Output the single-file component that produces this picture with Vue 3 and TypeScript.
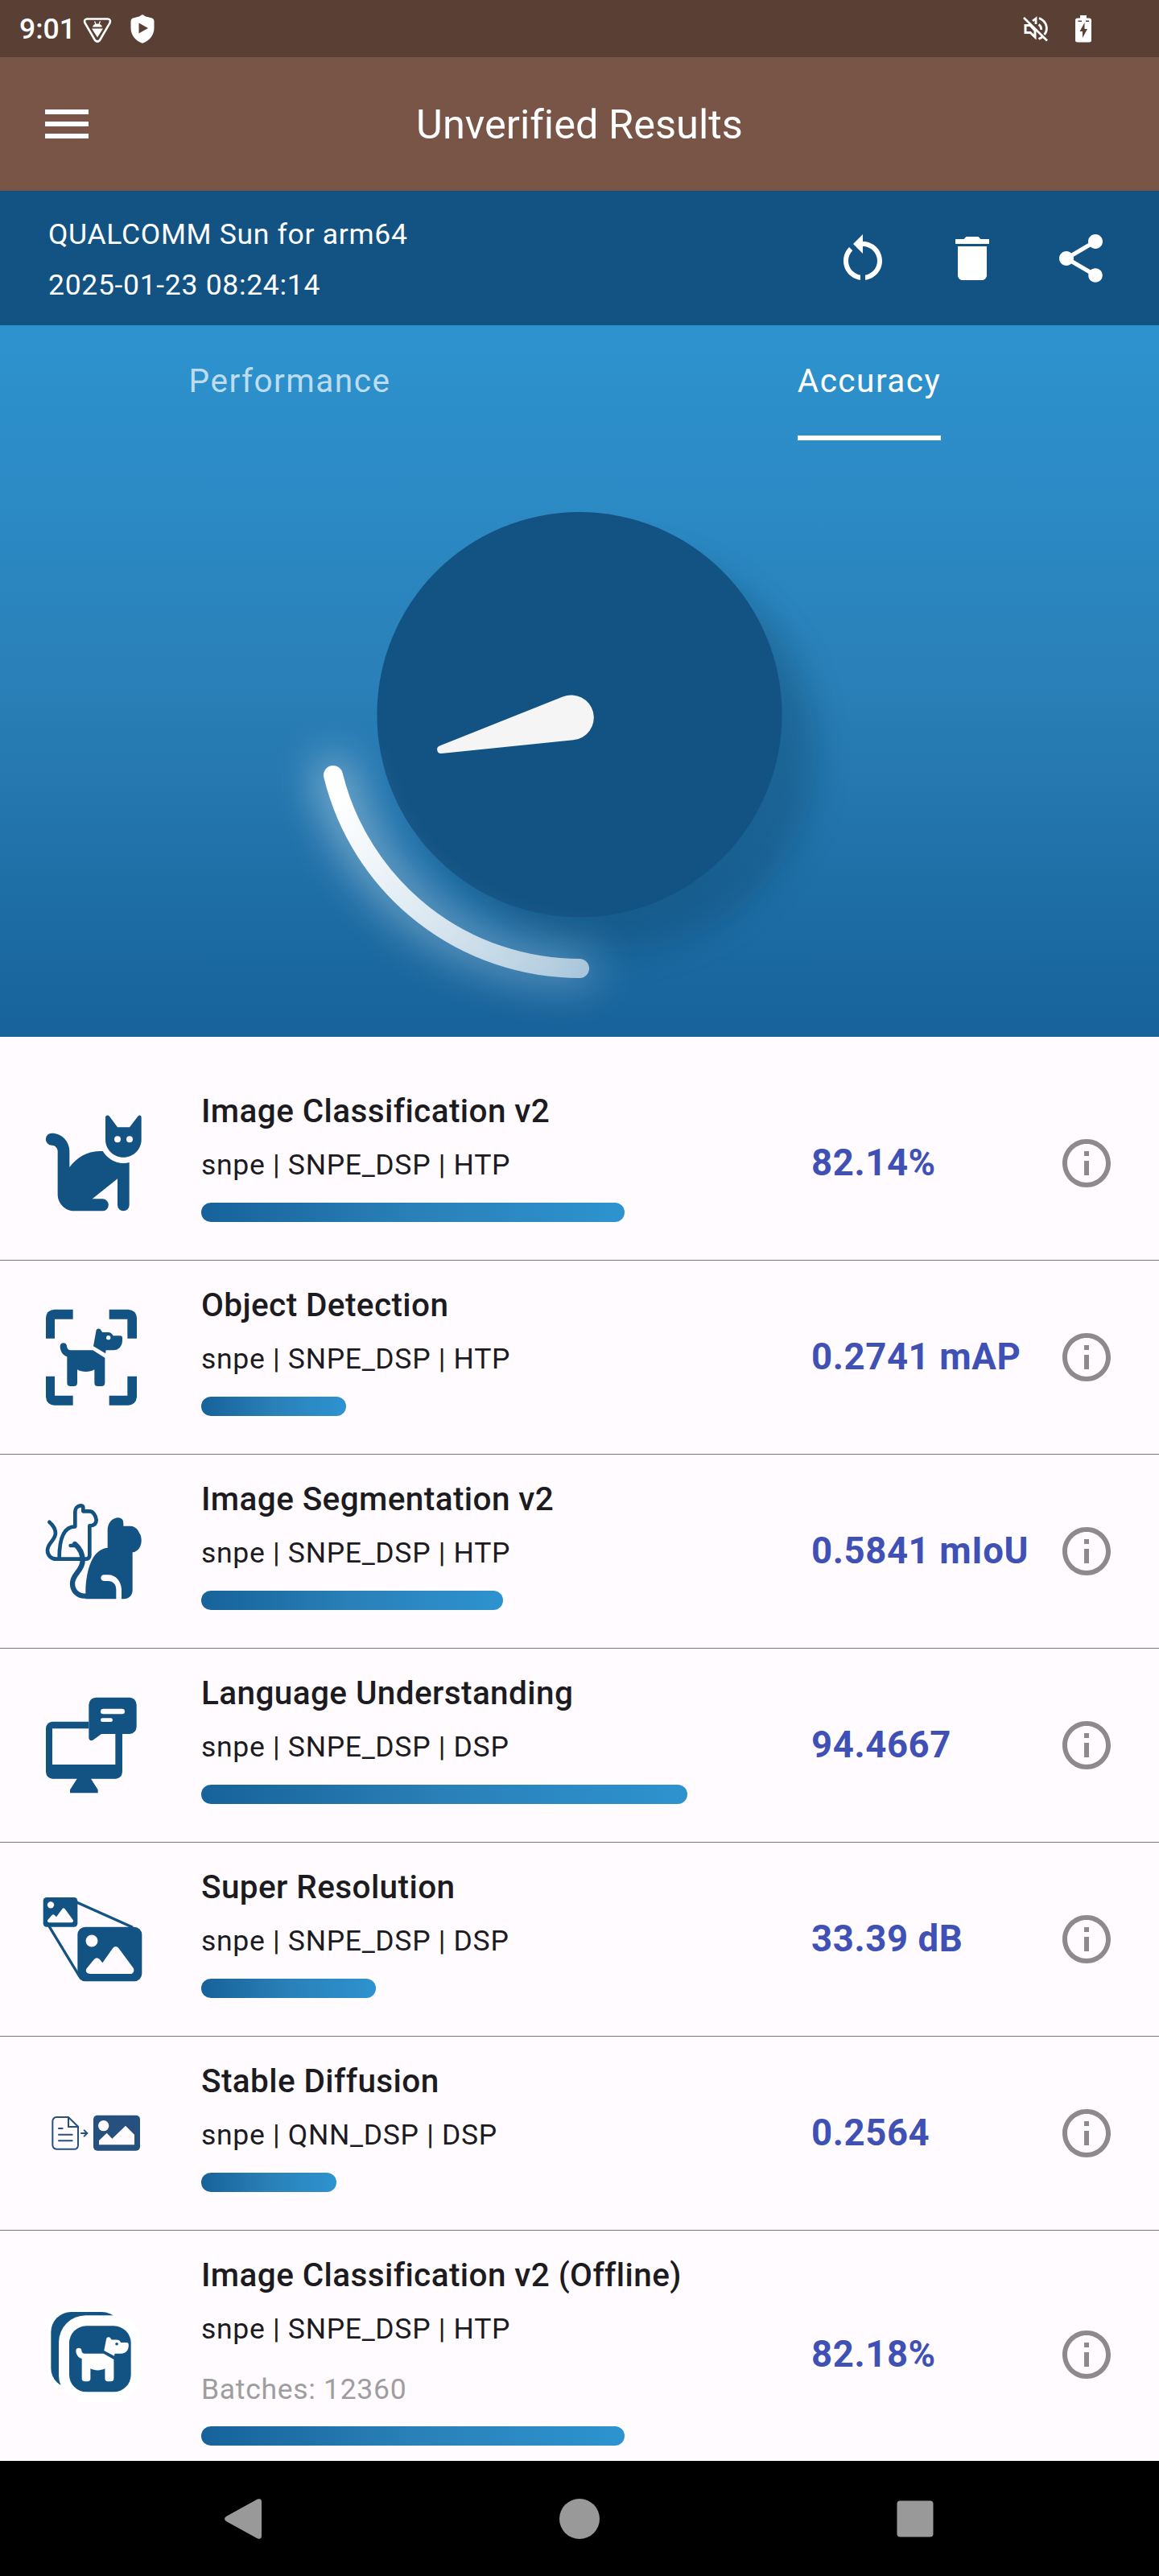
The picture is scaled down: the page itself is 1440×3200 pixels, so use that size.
<script setup lang="ts">
interface ResultRow {
  icon: string
  offset: number
  title: string
  backend: string
  batches?: string
  bar: number
  value: string
}

const rows: ResultRow[] = [
  { icon: 'cat', offset: 0, title: 'Image Classification v2', backend: 'snpe | SNPE_DSP | HTP', bar: 526, value: '82.14%' },
  { icon: 'detect', offset: 2, title: 'Object Detection', backend: 'snpe | SNPE_DSP | HTP', bar: 180, value: '0.2741 mAP' },
  { icon: 'segment', offset: 5, title: 'Image Segmentation v2', backend: 'snpe | SNPE_DSP | HTP', bar: 375, value: '0.5841 mIoU' },
  { icon: 'language', offset: 8, title: 'Language Understanding', backend: 'snpe | SNPE_DSP | DSP', bar: 604, value: '94.4667' },
  { icon: 'super', offset: -19, title: 'Super Resolution', backend: 'snpe | SNPE_DSP | DSP', bar: 217, value: '33.39 dB' },
  { icon: 'diffusion', offset: -75, title: 'Stable Diffusion', backend: 'snpe | QNN_DSP | DSP', bar: 168, value: '0.2564' },
  { icon: 'offline', offset: 0, title: 'Image Classification v2 (Offline)', backend: 'snpe | SNPE_DSP | HTP', batches: 'Batches: 12360', bar: 526, value: '82.18%' },
]

const dogBody =
  'M134 216C134 200 159 200 159 216C160 226 166 231 173 231H256L301 259V352Q301 365 288 365H274Q262 365 262 352V303C245 314 215 314 198 303V352Q198 365 185 365H173Q160 365 160 352V255C145 250 134 236 134 216Z'
const dogHead =
  'M268 160C268 149 283 147 287 157L291 164H312C322 164 327 168 332 177H358Q366 177 366 186V194C366 216 352 231 333 231H305L303 243L258 216Z'
</script>

<template>
  <div class="screen">
    <div class="status">
      <span class="clock">9:01</span>
      <svg class="s-debug" width="36" height="34" viewBox="0 0 36 34">
        <path d="M5 3.5H31Q35 4 33.500 8.500L21 30Q18 33 15 30L2.500 8.500Q1 4 5 3.500Z" fill="none" stroke="#fff" stroke-width="2.600" />
        <path d="M12 13.500Q13 9.500 18 9.500T24 13.500ZM11 15.500H25L18 26.500Z" fill="#fff" />
        <path d="M14.500 6.500L16 10M21.500 6.500L20 10" stroke="#fff" stroke-width="1.300" />
      </svg>
      <svg class="s-shield" width="30" height="36" viewBox="0 0 30 36">
        <path fill-rule="evenodd" fill="#fff" d="M15 0L19 2.500L27 4.500Q29.500 5.500 29.500 8V17C29.500 26 23 33 15 35.800C7 33 .5 26 .5 17V8Q.5 5.500 3 4.500L11 2.500ZM10.500 10.500V23.500L22 17Z" />
      </svg>
      <svg class="s-mute" width="32" height="32" viewBox="0 0 32 32" fill="none" stroke="#fff">
        <path d="M2 2L31 30.500" stroke-width="2.600" />
        <path d="M4 11.500H10L16 18V26L10 20.500H4Z" stroke-width="3" />
        <path d="M13 6L17 3V10M21 2.500C32 7 32 18 27.500 23M20.500 10.500Q24 12.500 23.500 17M20.500 28.500L25 26" stroke-width="2.800" />
      </svg>
      <svg class="s-battery" width="20" height="34" viewBox="0 0 20 34">
        <path fill-rule="evenodd" fill="#fff" d="M6 0H14V3.500H17Q20 3.500 20 6V31Q20 33.500 17 33.500H3Q0 33.500 0 31V6Q0 3.500 3 3.500H6ZM11.500 9L5.500 20H9V28L15 17H11.500ZM3.500 6.500V8H8V6.500ZM13 6.500V8H17V6.500Z" />
      </svg>
    </div>

    <header class="appbar">
      <svg class="menu" width="72" height="72" viewBox="0 0 24 24" fill="#fff">
        <path d="M3 18h18v-2H3v2zm0-5h18v-2H3v2zm0-7v2h18V6H3z" />
      </svg>
      <h1>Unverified Results</h1>
    </header>

    <div class="device">
      <div class="device-text">
        <div>QUALCOMM Sun for arm64</div>
        <div>2025-01-23 08:24:14</div>
      </div>
      <div class="actions">
        <svg width="72" height="72" viewBox="0 0 24 24" fill="#fff">
          <path d="M12 5V2L8 6l4 4V7c3.310 0 6 2.690 6 6 0 2.970-2.170 5.430-5 5.910v2.020c3.950-.49 7-3.850 7-7.930 0-4.420-3.580-8-8-8zM6 13c0-1.650.67-3.150 1.760-4.240L6.340 7.340C4.900 8.790 4 10.790 4 13c0 4.080 3.050 7.440 7 7.930v-2.020c-2.830-.48-5-2.940-5-5.910z" />
        </svg>
        <svg width="72" height="72" viewBox="0 0 24 24" fill="#fff">
          <path d="M6 19c0 1.100.9 2 2 2h8c1.100 0 2-.9 2-2V7H6v12zM19 4h-3.500l-1-1h-5l-1 1H5v2h14V4z" />
        </svg>
        <svg width="72" height="72" viewBox="0 0 24 24" fill="#fff">
          <path d="M18 16.080c-.76 0-1.440.3-1.960.77L8.910 12.700c.05-.23.09-.46.09-.7s-.04-.47-.09-.7l7.050-4.110c.54.5 1.250.81 2.040.81 1.660 0 3-1.340 3-3s-1.340-3-3-3-3 1.340-3 3c0 .24.04.47.09.7L8.040 9.810C7.500 9.310 6.790 9 6 9c-1.660 0-3 1.340-3 3s1.340 3 3 3c.79 0 1.500-.31 2.040-.81l7.120 4.160c-.05.21-.08.43-.08.65 0 1.610 1.310 2.920 2.920 2.920 1.610 0 2.920-1.310 2.920-2.920s-1.310-2.920-2.920-2.920z" />
        </svg>
      </div>
    </div>

    <section class="hero">
      <nav class="tabs">
        <div class="tab"><span>Performance</span></div>
        <div class="tab active"><span>Accuracy</span></div>
      </nav>
      <svg class="gauge" width="1440" height="741" viewBox="0 547 1440 741">
        <defs>
          <linearGradient id="arc" gradientUnits="userSpaceOnUse" x1="440" y1="970" x2="725" y2="1200">
            <stop offset="0" stop-color="#fff" />
            <stop offset="1" stop-color="#fff" stop-opacity=".58" />
          </linearGradient>
          <filter id="soft" filterUnits="userSpaceOnUse" x="250" y="560" width="950" height="728">
            <feGaussianBlur stdDeviation="21" />
          </filter>
          <filter id="glow" filterUnits="userSpaceOnUse" x="250" y="760" width="650" height="528">
            <feGaussianBlur stdDeviation="26" />
          </filter>
        </defs>
        <circle cx="766" cy="934" r="248" fill="#0c4a70" opacity=".42" filter="url(#soft)" />
        <circle cx="720" cy="887.700" r="251.600" fill="#135384" />
        <path d="M414 963A315 315 0 0 0 720 1203" fill="none" stroke="url(#arc)" stroke-width="46" stroke-linecap="round" opacity=".44" filter="url(#glow)" />
        <path d="M414 963A315 315 0 0 0 720 1203" fill="none" stroke="url(#arc)" stroke-width="24" stroke-linecap="round" />
        <path d="M546.200 926.400L699.200 865.500A28 28 0 1 1 712.300 919.300L548.500 936A5 5 0 0 1 546.200 926.400Z" fill="#f5f5f5" />
      </svg>
    </section>

    <main class="list">
      <div v-for="row in rows" :key="row.title" class="row" :class="{ tall: row.batches }">
        <svg class="pic" width="170" height="170" :viewBox="`0 ${row.offset} 510 510`">
          <g v-if="row.icon === 'cat'" fill="#135384">
            <path d="M103 143C140 143 169 173 169 210V270C195 235 235 210 280 210H293C310 238 340 255 370 255C378 255 385 254 392 252V411a22 22 0 0 1-44 0V313L254 388H292a22.500 22.500 0 0 1 0 45H187C153 433 125 405 125 371V210C125 198 115 188 103 188a22.500 22.500 0 0 1 0-45Z" />
            <path d="M303 84C303 76 313 74 318 80L348 121H393L424 80C429 74 437 76 437 84V167C437 203 407 233 370 233C333 233 303 203 303 167Z" />
            <circle cx="348" cy="166" r="12" fill="#fffbff" />
            <circle cx="393" cy="166" r="12" fill="#fffbff" />
          </g>
          <g v-else-if="row.icon === 'detect'" fill="#135384">
            <path d="M81 187V110Q83 81 112 79H182V115H114V187ZM317 79H388Q417 81 420 110V187H385V115H317ZM81 328H114V400H182V436H112Q83 434 81 405ZM420 328H385V400H317V436H388Q417 434 420 405Z" />
            <path :d="dogBody" />
            <path :d="dogHead" />
            <circle cx="314" cy="184" r="8" fill="#fffbff" />
          </g>
          <g v-else-if="row.icon === 'segment'" fill="none" stroke="#135384" stroke-linecap="round" stroke-linejoin="round">
            <path stroke-width="14" d="M94 151C110 165 117 178 117 192C117 220 87 228 87 257C87 276 101 289 120 289H228Q244 289 244 274V165C260 165 269 158 269 143C267 128 258 111 243 111H220V98Q220 90 210 90C198 91 190 101 190 113V168C150 168 131 210 131 285" />
            <path stroke-width="14" d="M173 239H196" />
            <path stroke-width="19" d="M189 233C207 248 218 270 218 295C218 332 180 345 180 380C180 408 200 427 225 427H234" />
            <path fill="#135384" stroke="none" d="M229 438V405C232 325 255 252 311 247V182C311 155 328 135 352 135Q370 137 370 155V166H395C408 166 417 172 424 182L434 200C440 220 438 240 424 255Q414 264 404 264V405C404 425 390 438 372 438H363V402C361 372 342 348 313 348H298C282 348 282 371 298 371H313C333 371 343 386 343 403V438Z" />
          </g>
          <g v-else-if="row.icon === 'language'" fill="#135384">
            <path d="M105 175H241V201H105V335H340V221H366V363Q364 386 342 388H249L275 429V441H171V429L197 388H105Q83 386 81 363V200Q83 177 105 175Z" />
            <path d="M268 85H393Q417 87 419 112V195Q417 219 393 221H288L256 244Q243 249 241 236V112Q243 87 268 85Z" />
            <rect x="285" y="127" width="90" height="20" rx="10" fill="#fffbff" />
            <rect x="285" y="162" width="45" height="14" rx="7" fill="#fffbff" />
          </g>
          <g v-else-if="row.icon === 'super'" fill="#135384">
            <path d="M197 99L405 192M92 186L206 374" stroke="#135384" stroke-width="10" fill="none" />
            <rect x="71" y="80" width="128" height="110" rx="13" />
            <rect x="199" y="190" width="240" height="203" rx="29" />
            <g fill="#fffbff">
              <circle cx="99" cy="108" r="12.500" />
              <path d="M88 164L103 147Q109 141 114 147L120 153L141 124Q147 115 153 124L182 164Q185 171 178 174H94Q84 172 88 164Z" />
              <circle cx="252" cy="242" r="22.500" />
              <path d="M232 346L260 312Q270 300 281 310L292 324L330 270Q341 257 352 269L408 345Q413 359 400 365H243Q226 360 232 346Z" />
            </g>
          </g>
          <g v-else-if="row.icon === 'diffusion'" fill="none" stroke="#26507e" stroke-width="6" stroke-linecap="round">
            <path d="M121 120H165L201 155V224Q201 238 188 239H121Q107 238 106 224V135Q107 121 121 120ZM165 120V156H201" />
            <path d="M129 162H143M129 185H179M129 208H179M213 180H234M224 169L235 180L224 191" />
            <rect x="258" y="113" width="174" height="132" rx="15" fill="#26507e" stroke="none" />
            <circle cx="296" cy="152" r="20" fill="#fffbff" stroke="none" />
            <path d="M279 207L308 179L328 200L378 152L411 185V223H279Z" fill="#fffbff" stroke="none" />
          </g>
          <g v-else fill="#135384">
            <rect x="84" y="80" width="297" height="316" rx="91" fill="#fff" />
            <rect x="100" y="96" width="265" height="284" rx="75" />
            <rect x="129" y="109" width="307" height="323" rx="100" fill="#fff" />
            <rect x="168" y="148" width="230" height="246" rx="64" />
            <g transform="matrix(.846 0 0 .77 79.600 73.500)" fill="#fff">
              <path :d="dogBody" />
              <path :d="dogHead" />
              <circle cx="314" cy="184" r="6.500" fill="#135384" />
            </g>
          </g>
        </svg>
        <div class="info">
          <div class="title">{{ row.title }}</div>
          <div class="sub">{{ row.backend }}</div>
          <div v-if="row.batches" class="batches">{{ row.batches }}</div>
          <div class="bar" :style="{ width: row.bar + 'px' }"></div>
        </div>
        <div class="value">{{ row.value }}</div>
        <svg class="about" width="72" height="72" viewBox="0 0 24 24" fill="#8c8a8c">
          <path d="M11 7h2v2h-2zm0 4h2v6h-2zm1-9C6.480 2 2 6.480 2 12s4.480 10 10 10 10-4.480 10-10S17.520 2 12 2zm0 18c-4.410 0-8-3.590-8-8s3.590-8 8-8 8 3.590 8 8-3.590 8-8 8z" />
        </svg>
      </div>
    </main>

    <footer class="navbar">
      <svg width="1440" height="143" viewBox="0 0 1440 143" fill="#999">
        <path d="M281 69L320 47.500Q325 46 325 51V93Q325 98 320 96.500L281 75Q277 72 281 69Z" />
        <circle cx="720" cy="72" r="25" />
        <rect x="1114.500" y="49.500" width="45" height="45" rx="4" />
      </svg>
    </footer>
  </div>
</template>

<style scoped>
.screen {
  width: 1440px;
  height: 3200px;
  display: flex;
  flex-direction: column;
  overflow: hidden;
  background: #fffbff;
  font-family: Roboto, sans-serif;
  color: #1c1b1f;
}
.screen svg {
  display: block;
  flex: none;
}
.status,
.appbar,
.device {
  box-sizing: border-box;
  flex: none;
}
.status {
  height: 71px;
  background: #5a4034;
  display: flex;
  align-items: center;
  padding: 0 84px 0 24px;
}
.clock {
  width: 79px;
  font-size: 35.5px;
  font-weight: 500;
  line-height: 70px;
  color: #fff;
}
.s-debug {
  margin-top: 2px;
}
.s-shield {
  margin-left: 23px;
}
.s-mute {
  margin-left: auto;
}
.s-battery {
  margin-left: 34px;
}
.appbar {
  height: 166px;
  background: #795547;
  display: grid;
  grid-template-columns: 1fr auto 1fr;
  align-items: center;
  padding: 0 47px;
}
h1 {
  margin: 2px 0 0;
  font-size: 50.5px;
  font-weight: 400;
  line-height: 60px;
  letter-spacing: 0.03px;
  color: #fff;
}
.device {
  height: 167px;
  background: #135384;
  display: flex;
  justify-content: space-between;
  align-items: center;
  padding: 0 61px 0 60px;
  color: #fff;
}
.device-text {
  margin-top: 4px;
  font-size: 35.5px;
  line-height: 63px;
  letter-spacing: 0.69px;
}
.actions {
  display: flex;
  gap: 63.500px;
}
.hero {
  height: 884px;
  flex: none;
  display: flex;
  flex-direction: column;
  background: linear-gradient(#2d93cf, #2a80b8 50%, #17629a);
}
.tabs {
  display: flex;
  height: 143px;
}
.tab {
  flex: 1;
  display: flex;
  justify-content: center;
  font-size: 40.5px;
  line-height: 135px;
  letter-spacing: 1.500px;
  color: rgba(255, 255, 255, 0.7);
}
.tab span {
  padding-top: 2px;
  border-bottom: 6px solid transparent;
}
.tab.active {
  color: #fff;
}
.tab.active span {
  border-color: #fff;
}
.list {
  flex: 1;
  min-height: 0;
  overflow: hidden;
  padding-top: 37px;
  background: #fffbff;
}
.row {
  height: 241px;
  box-sizing: border-box;
  border-bottom: 1px solid #79747e;
  display: flex;
  align-items: center;
  padding: 0 54px 0 30px;
}
.row.tall {
  height: 309px;
}
.info {
  align-self: flex-start;
  width: 758px;
  margin-left: 50px;
  padding-top: 30px;
  white-space: nowrap;
}
.title {
  font-size: 40.5px;
  font-weight: 500;
  line-height: 50px;
  letter-spacing: 0.4px;
}
.sub,
.batches {
  font-size: 35.5px;
  line-height: 50px;
  letter-spacing: 0.7px;
  margin-top: 17px;
}
.batches {
  margin-top: 25px;
  color: #9e9e9e;
}
.bar {
  height: 24px;
  margin-top: 22px;
  border-radius: 12px;
  background: linear-gradient(90deg, #17629a, #2a80b8 50%, #2d93cf);
}
.batches + .bar {
  margin-top: 21px;
}
.value {
  flex: 1;
  font-size: 45.5px;
  font-weight: 700;
  line-height: 54px;
  letter-spacing: 0.6px;
  white-space: nowrap;
  color: #3f51b5;
}
.navbar {
  height: 143px;
  flex: none;
  background: #000;
}
</style>

<style>
body {
  margin: 0;
}
</style>
